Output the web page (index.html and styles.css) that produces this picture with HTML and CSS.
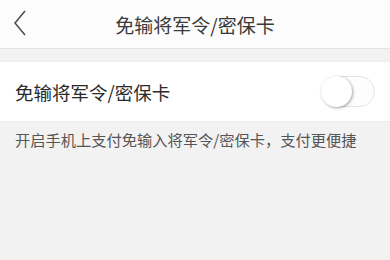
FILE: index.html
```html
<!DOCTYPE html>
<html lang="zh">
<head>
<meta charset="utf-8">
<link rel="stylesheet" href="styles.css">
</head>
<body>
<header class="nav">
  <span class="back"><svg width="14" height="26" viewBox="0 0 14 26"><path d="M12 1 L2 13 L12 25" fill="none" stroke="#4a4a4a" stroke-width="1.5"/></svg></span>
  <h1 class="title">免输将军令/密保卡</h1>
</header>
<section class="row">
  <span class="label">免输将军令/密保卡</span>
  <span class="switch"><span class="knob"></span></span>
</section>
<p class="desc">开启手机上支付免输入将军令/密保卡，支付更便捷</p>
</body>
</html>
```
FILE: styles.css
```css
html, body {
  margin: 0;
  padding: 0;
  background: #f2f2f2;
  font-family: "Noto Sans CJK SC", "Noto Sans", sans-serif;
  width: 390px;
  height: 260px;
  overflow: hidden;
}
.nav {
  height: 48px;
  background: #fcfcfc;
  border-bottom: 1px solid #e2e2e2;
  display: flex;
  align-items: center;
  justify-content: center;
  position: relative;
}
.back {
  position: absolute;
  left: 13px;
  top: 10px;
  display: block;
}
.title {
  margin: 0;
  font-size: 19px;
  font-weight: normal;
  color: #3a3a3a;
}
.row {
  margin-top: 12px;
  height: 59px;
  background: #fff;
  border-top: 1px solid #ececec;
  border-bottom: 1px solid #ececec;
  display: flex;
  align-items: center;
  justify-content: space-between;
  padding: 0 15px;
}
.label {
  font-size: 18.5px;
  color: #2a2a2a;
}
.switch {
  width: 54px;
  height: 31px;
  border-radius: 16px;
  border: 1px solid #e4e4e4;
  background: #fdfdfd;
  position: relative;
  box-sizing: border-box;
}
.knob {
  position: absolute;
  left: -1px;
  top: -1px;
  width: 31px;
  height: 31px;
  border-radius: 50%;
  background: #fff;
  box-shadow: 1px 1px 3px rgba(0,0,0,0.35);
}
.desc {
  margin: 7px 15px 0;
  font-size: 15.25px;
  line-height: 20px;
  color: #555;
}
```
